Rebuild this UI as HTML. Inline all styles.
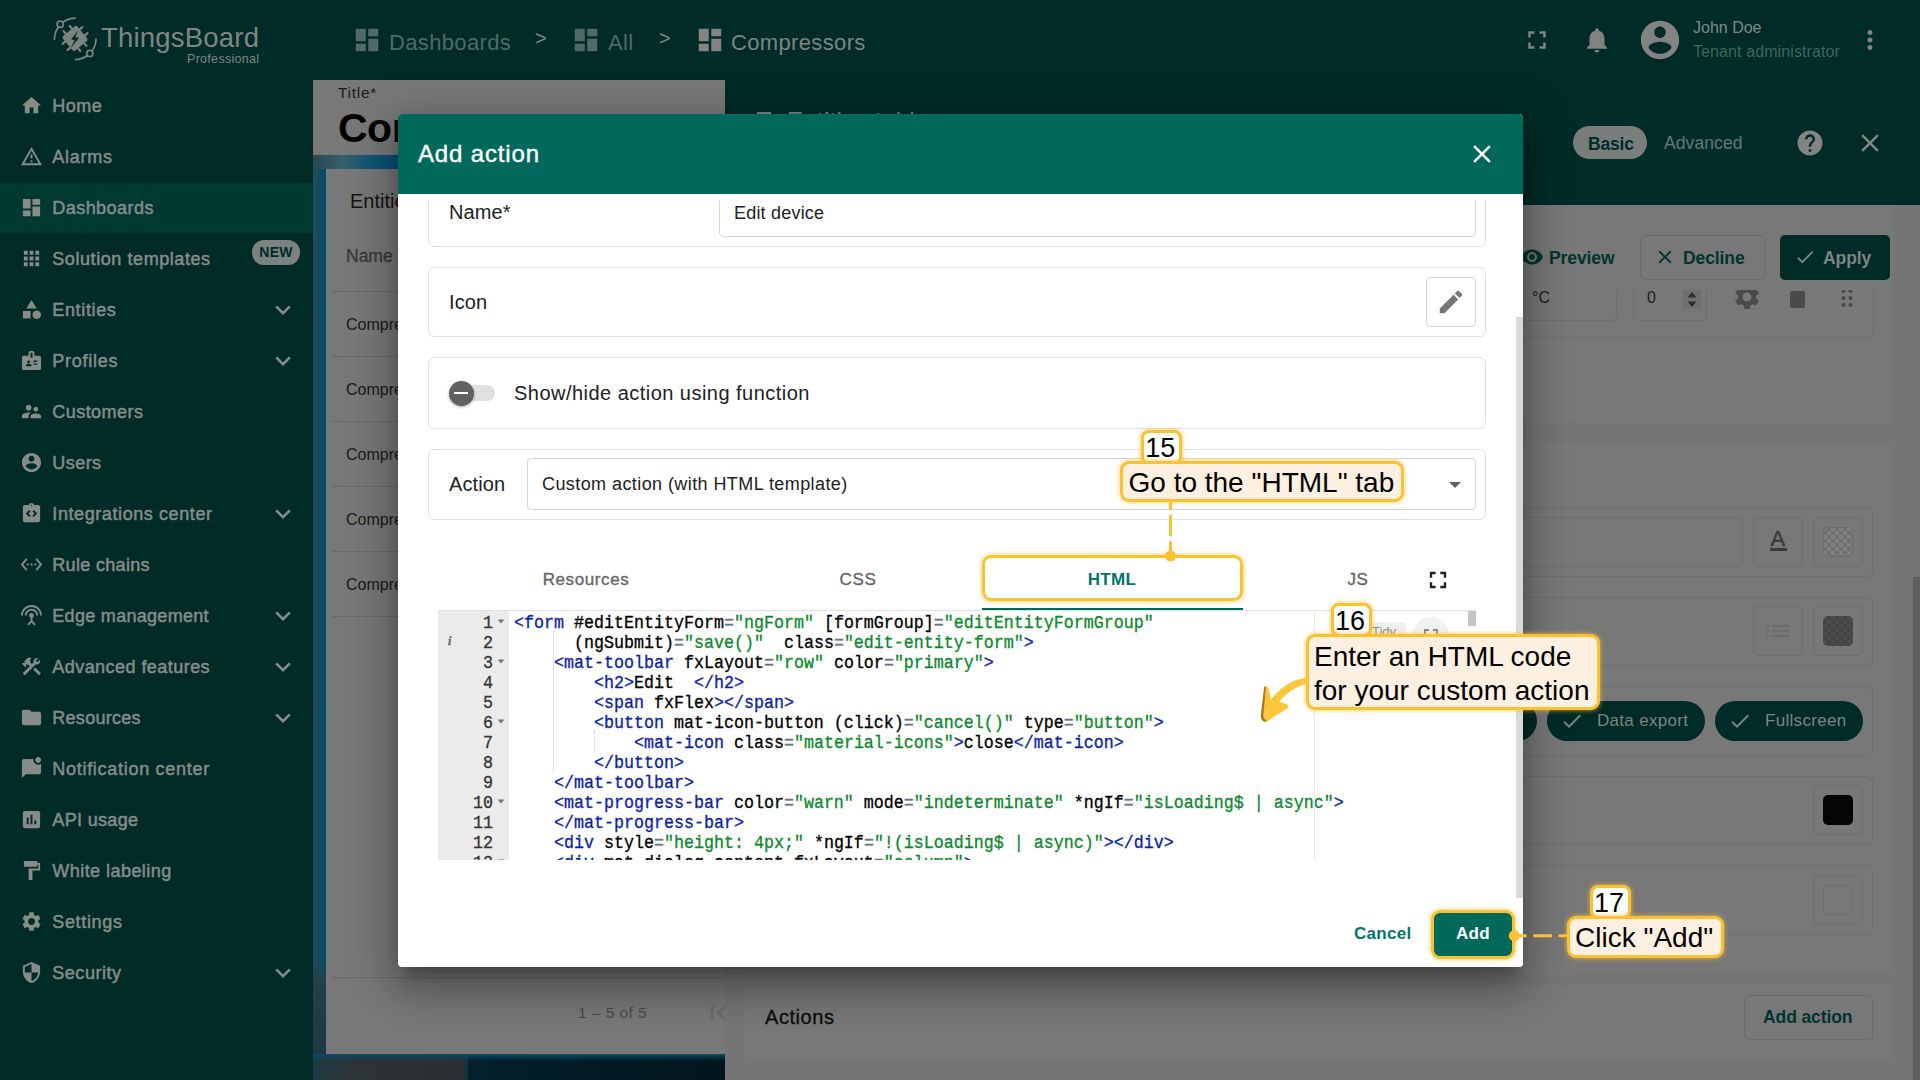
<!DOCTYPE html>
<html><head><meta charset="utf-8"><title>ThingsBoard</title>
<style>
*{box-sizing:border-box;margin:0;padding:0}
html,body{width:1920px;height:1080px;overflow:hidden;background:#787878;font-family:"Liberation Sans",sans-serif}
.abs{position:absolute}
#side{position:absolute;left:0;top:0;width:313px;height:1080px;background:#002b27}
#top{position:absolute;left:313px;top:0;width:1607px;height:80px;background:#002b27}
.mi{position:absolute;left:0;width:313px;height:51px;color:#868c8a;font-size:18px;letter-spacing:.45px;-webkit-text-stroke:.5px #868c8a}
.mi span{position:absolute;left:52.300px;top:16px;white-space:nowrap;line-height:20px}
.mi svg.ic{position:absolute;left:19.500px;top:14px;width:23px;height:23px;fill:#868c8a}
.mi svg.ch{position:absolute;left:271px;top:14px;width:24px;height:24px;fill:none;stroke:#868c8a;stroke-width:2.6}
.mi.act{background:linear-gradient(180deg,#002b27 0,#002b27 1px,#003832 1px,#003832 100%)}
.t{position:absolute;white-space:nowrap}
.new{-webkit-text-stroke:0;position:absolute;left:252px;top:7px;width:48px;height:25px;border-radius:12px;background:#7b8381;color:#002b27;font-size:14px;line-height:24px;text-align:center;letter-spacing:.3px}
.bc{top:29px;font-size:22px;line-height:28px;letter-spacing:.35px}

#dash{position:absolute;left:313px;top:80px;width:412px;height:1000px;overflow:hidden;background:linear-gradient(90deg,#264a56 0,#0a4c5c 8px,#004a66 12px,#003f6a 100%)}
#dtitle{position:absolute;left:0;top:0;width:412px;height:75px;background:#787878}
#dbot{position:absolute;left:0;top:974px;width:412px;height:26px;background:linear-gradient(180deg,#0b4a66 0,rgba(11,74,102,0) 7px),linear-gradient(90deg,#1d3a42 0,#2c3335 40px,#2a2f30 152px,#0a3648 154px,#03202c 156px,#02151d 100%)}
#wcard{position:absolute;left:13px;top:89px;width:420px;height:885px;background:#787878}
#wcard .ln{position:absolute;left:6px;right:0;height:1px;background:#6a6a6a}
#rp{position:absolute;left:725px;top:80px;width:1195px;height:1000px;background:#757575;overflow:hidden}
#rph{position:absolute;left:0;top:0;width:1195px;height:125px;background:#002b27}
.card{position:absolute;border:1px solid #6e6e6e;border-radius:6px}
#dlg{position:absolute;left:398px;top:114px;width:1125px;height:853px;background:#fff;border-radius:4px;box-shadow:0 11px 15px -7px rgba(0,0,0,.28),0 24px 38px 3px rgba(0,0,0,.2),0 9px 46px 8px rgba(0,0,0,.18);overflow:hidden}
#dh{z-index:5;position:absolute;left:0;top:0;width:1125px;height:80px;background:#00695c}
.box{position:absolute;left:30px;width:1058px;border:1px solid #e0e0e0;border-radius:6px}
.lbl{position:absolute;left:51px;font-size:20px;line-height:24px;color:#212121;white-space:nowrap;letter-spacing:.1px}
.inp{position:absolute;border:1px solid #d6d6d6;border-radius:4px}
.tab{position:absolute;top:454.700px;font-size:17px;line-height:22px;color:#666;white-space:nowrap;letter-spacing:.6px;transform:translateX(-50%);-webkit-text-stroke:.35px #666}
#ed{position:absolute;left:40px;top:497px;width:1038px;height:249px;overflow:hidden;background:#fff;font-family:"Liberation Mono",monospace;font-size:16.67px;line-height:20px;-webkit-text-stroke:.3px}
#gut{position:absolute;left:0;top:0;width:71px;height:249px;background:#ebebeb}
.cl{position:absolute;left:76px;white-space:pre;color:#000;height:20px;margin-top:3px;transform:scaleY(1.06);transform-origin:0 70%}
.gn{position:absolute;left:0;width:55px;text-align:right;color:#333;height:20px;margin-top:3px;transform:scaleY(1.06);transform-origin:0 70%}
.tg{color:#0a1ea8}.st{color:#0a8a2c}.eq{color:#687687}
.an{position:absolute;font-family:"Liberation Sans",sans-serif;font-size:28px;color:#000;white-space:nowrap;border:3px solid #fbc131;box-shadow:0 0 5px rgba(251,193,49,.85)}
.an.nb{background:#fff;border-radius:8px;line-height:30px;text-align:center;font-size:27px;text-indent:-2px}
.an.tx{background:#fef0e0;border-radius:9px;line-height:34px;padding:0 0 0 5px}
.cp{left:20px;font-size:16px;line-height:20px;color:#1a1a1a}
.bt{font-size:17.500px;line-height:22px;font-weight:bold;color:#00352f;letter-spacing:-.1px}
.ck{width:30px;height:30px;border-radius:5px;background-image:linear-gradient(45deg,rgba(0,0,0,.12) 25%,transparent 25%,transparent 75%,rgba(0,0,0,.12) 75%),linear-gradient(45deg,rgba(0,0,0,.12) 25%,transparent 25%,transparent 75%,rgba(0,0,0,.12) 75%);background-size:8px 8px;background-position:0 0,4px 4px}
.chip{height:40px;border-radius:20px;background:#002b27}
.chip svg{position:absolute;left:13px;top:8px;width:24px;height:24px;fill:#7d8583}
.chip span{position:absolute;left:50px;top:9px;font-size:17px;line-height:22px;color:#7d8583;white-space:nowrap;letter-spacing:.3px}
</style></head><body>
<div id="side">
<svg class="abs" style="left:50px;top:14px;width:50px;height:50px" viewBox="0 0 50 50">
<g fill="none" stroke="#7d8281" stroke-width="1.700" stroke-linecap="round">
<path d="M4.500 25.500A21 21 0 0 1 25 4.200"/><path d="M46 25A21 21 0 0 1 25.500 45.600"/>
<circle cx="10.200" cy="10.200" r="3.100" fill="#002b27"/><circle cx="39.800" cy="39.400" r="3.100" fill="#002b27"/>
</g>
<g transform="translate(25 24.500) rotate(50)">
<g stroke="#7d8281" stroke-width="2.200" stroke-linecap="round"><path d="M-4-13v26M4-13v26M-13-4h26M-13 4h26"/></g>
<rect x="-9.500" y="-9.500" width="19" height="19" rx="2" fill="#7d8281"/>
</g>
<path d="M28.200 16.200l-7.200 9.300 3.600.6-3.800 8 8.200-10.300-3.700-.6z" fill="#002b27"/>
</svg>
<span class="t" style="left:101px;top:21px;font-size:27.500px;line-height:34px;color:#818685;letter-spacing:.2px">ThingsBoard</span>
<span class="t" style="left:187px;top:50.500px;font-size:12.500px;line-height:16px;color:#818685;letter-spacing:.3px">Professional</span>
<div class="mi" style="top:80px"><svg class="ic" viewBox="0 0 24 24"><path d="M10 20v-6h4v6h5v-8h3L12 3 2 12h3v8z"/></svg><span>Home</span></div>
<div class="mi" style="top:131px"><svg class="ic" viewBox="0 0 24 24"><path d="M12 5.99L19.53 19H4.47L12 5.99M12 2L1 21h22L12 2zm1 14h-2v2h2v-2zm0-6h-2v4h2v-4z"/></svg><span style="letter-spacing:0.72px">Alarms</span></div>
<div class="mi act" style="top:182px"><svg class="ic" viewBox="0 0 24 24"><path d="M3 13h8V3H3v10zm0 8h8v-6H3v6zm10 0h8V11h-8v10zm0-18v6h8V3h-8z"/></svg><span>Dashboards</span></div>
<div class="mi" style="top:233px"><svg class="ic" viewBox="0 0 24 24"><path d="M4 8h4V4H4v4zm6 12h4v-4h-4v4zm-6 0h4v-4H4v4zm0-6h4v-4H4v4zm6 0h4v-4h-4v4zm6-10v4h4V4h-4zm-6 4h4V4h-4v4zm6 6h4v-4h-4v4zm0 6h4v-4h-4v4z"/></svg><span style="letter-spacing:0.57px">Solution templates</span><b class="new">NEW</b></div>
<div class="mi" style="top:284px"><svg class="ic" viewBox="0 0 24 24"><path d="M12 2l-5.5 9h11z M17.5 13a4.5 4.5 0 1 0 0 9 4.5 4.5 0 0 0 0-9z M3 13.5h8v8H3z"/></svg><span style="letter-spacing:0.65px">Entities</span><svg class="ch" viewBox="0 0 24 24"><path d="M5.200 8.400l6.800 6.800 6.800-6.800"/></svg></div>
<div class="mi" style="top:335px"><svg class="ic" viewBox="0 0 24 24"><path d="M20 7h-5V4c0-1.1-.9-2-2-2h-2c-1.1 0-2 .9-2 2v3H4c-1.1 0-2 .9-2 2v11c0 1.1.9 2 2 2h16c1.1 0 2-.9 2-2V9c0-1.1-.9-2-2-2zM9 12c.83 0 1.5.67 1.5 1.5S9.83 15 9 15s-1.500-.67-1.500-1.500S8.170 12 9 12zm3 6H6v-.75c0-1 2-1.500 3-1.500s3 .5 3 1.500V18zm1-9h-2V4h2v5zm5 7.500h-4V15h4v1.500zm0-3h-4V12h4v1.500z"/></svg><span style="letter-spacing:0.75px">Profiles</span><svg class="ch" viewBox="0 0 24 24"><path d="M5.200 8.400l6.800 6.800 6.800-6.800"/></svg></div>
<div class="mi" style="top:386px"><svg class="ic" viewBox="0 0 24 24"><path d="M16.5 12c1.38 0 2.49-1.12 2.49-2.5S17.88 7 16.5 7C15.12 7 14 8.12 14 9.5s1.12 2.5 2.5 2.5zM9 11c1.66 0 2.99-1.34 2.99-3S10.66 5 9 5C7.34 5 6 6.34 6 8s1.34 3 3 3zm7.5 3c-1.83 0-5.5.92-5.5 2.75V19h11v-2.250c0-1.83-3.67-2.75-5.500-2.75zM9 13c-2.33 0-7 1.17-7 3.5V19h7v-2.250c0-.85.33-2.34 2.37-3.47C10.500 13.100 9.660 13 9 13z"/></svg><span>Customers</span></div>
<div class="mi" style="top:437px"><svg class="ic" viewBox="0 0 24 24"><path d="M12 2C6.48 2 2 6.48 2 12s4.48 10 10 10 10-4.48 10-10S17.52 2 12 2zm0 3c1.66 0 3 1.34 3 3s-1.34 3-3 3-3-1.34-3-3 1.34-3 3-3zm0 14.2c-2.5 0-4.71-1.28-6-3.22.03-1.99 4-3.08 6-3.08 1.99 0 5.97 1.09 6 3.08-1.29 1.94-3.5 3.22-6 3.220z"/></svg><span>Users</span></div>
<div class="mi" style="top:488px"><svg class="ic" viewBox="0 0 24 24"><path d="M19 3h-4.18C14.4 1.84 13.3 1 12 1c-1.3 0-2.4.84-2.82 2H5c-1.1 0-2 .9-2 2v14c0 1.1.9 2 2 2h14c1.1 0 2-.9 2-2V5c0-1.1-.9-2-2-2zm-8 11.170l-1.410 1.420L6 12l3.590-3.590L11 9.830 8.830 12 11 14.170zm1-9.920c-.41 0-.75-.34-.75-.75s.34-.75.75-.75.75.34.75.75-.34.75-.75.750zm2.410 11.340L13 14.170 15.170 12 13 9.830l1.410-1.420L18 12l-3.590 3.590z"/></svg><span style="letter-spacing:0.59px">Integrations center</span><svg class="ch" viewBox="0 0 24 24"><path d="M5.200 8.400l6.800 6.800 6.800-6.800"/></svg></div>
<div class="mi" style="top:539px"><svg class="ic" viewBox="0 0 24 24"><path d="M7.77 6.76L6.23 5.48.82 12l5.41 6.52 1.54-1.28L3.42 12l4.35-5.240zM7 13h2v-2H7v2zm10-2h-2v2h2v-2zm-6 2h2v-2h-2v2zm6.770-7.520l-1.540 1.280L20.580 12l-4.350 5.240 1.540 1.280L23.180 12l-5.410-6.520z"/></svg><span style="letter-spacing:0.32px">Rule chains</span></div>
<div class="mi" style="top:590px"><svg class="ic" viewBox="0 0 24 24"><path d="M12 5c-3.87 0-7 3.13-7 7h2c0-2.76 2.24-5 5-5s5 2.24 5 5h2c0-3.87-3.13-7-7-7zm1 9.290c.88-.39 1.5-1.26 1.5-2.29 0-1.38-1.12-2.5-2.5-2.5S9.5 10.620 9.500 12c0 1.020.62 1.9 1.500 2.290v3.300L7.590 21 9 22.410l3-3 3 3L16.410 21 13 17.590v-3.300zM12 1C5.930 1 1 5.930 1 12h2c0-4.970 4.030-9 9-9s9 4.030 9 9h2c0-6.070-4.930-11-11-11z"/></svg><span style="letter-spacing:0.30px">Edge management</span><svg class="ch" viewBox="0 0 24 24"><path d="M5.200 8.400l6.800 6.800 6.800-6.800"/></svg></div>
<div class="mi" style="top:641px"><svg class="ic" viewBox="0 0 24 24"><path d="M13.783 15.172l2.121-2.121 5.996 5.996-2.121 2.121zM17.5 10c1.93 0 3.5-1.57 3.5-3.5 0-.58-.16-1.12-.41-1.6l-2.7 2.7-1.490-1.490 2.700-2.700c-.48-.25-1.020-.41-1.600-.41C15.570 3 14 4.570 14 6.500c0 .41.08.8.21 1.160l-1.850 1.850-1.780-1.780.71-.71-1.410-1.410L12 3.490c-1.170-1.170-3.070-1.170-4.240 0L4.220 7.030l1.410 1.410H2.810l-.71.71 3.540 3.540.71-.71V9.150l1.410 1.410.71-.71 1.780 1.780-7.410 7.410 2.120 2.120L16.340 9.790c.36.13.75.21 1.160.21z"/></svg><span>Advanced features</span><svg class="ch" viewBox="0 0 24 24"><path d="M5.200 8.400l6.800 6.800 6.800-6.800"/></svg></div>
<div class="mi" style="top:692px"><svg class="ic" viewBox="0 0 24 24"><path d="M10 4H4c-1.1 0-1.99.9-1.990 2L2 18c0 1.100.9 2 2 2h16c1.100 0 2-.9 2-2V8c0-1.100-.9-2-2-2h-8l-2-2z"/></svg><span style="letter-spacing:0.28px">Resources</span><svg class="ch" viewBox="0 0 24 24"><path d="M5.200 8.400l6.800 6.800 6.800-6.800"/></svg></div>
<div class="mi" style="top:743px"><svg class="ic" viewBox="0 0 24 24"><path d="M22 6.98V16c0 1.1-.9 2-2 2H6l-4 4V4c0-1.100.9-2 2-2h10.100c-.06.32-.1.66-.1 1 0 2.760 2.240 5 5 5 1.130 0 2.160-.39 3-1.020zM16 3c0 1.660 1.340 3 3 3s3-1.340 3-3-1.340-3-3-3-3 1.340-3 3z"/></svg><span style="letter-spacing:0.71px">Notification center</span></div>
<div class="mi" style="top:794px"><svg class="ic" viewBox="0 0 24 24"><path d="M19 3H5c-1.1 0-2 .9-2 2v14c0 1.1.9 2 2 2h14c1.1 0 2-.9 2-2V5c0-1.1-.9-2-2-2zM9 17H7v-7h2v7zm4 0h-2V7h2v10zm4 0h-2v-4h2v4z"/></svg><span style="letter-spacing:0.33px">API usage</span></div>
<div class="mi" style="top:845px"><svg class="ic" viewBox="0 0 24 24"><path d="M18 4V3c0-.55-.45-1-1-1H5c-.55 0-1 .45-1 1v4c0 .55.45 1 1 1h12c.55 0 1-.45 1-1V6h1v4H9v11c0 .55.45 1 1 1h2c.55 0 1-.45 1-1v-9h8V4h-3z"/></svg><span>White labeling</span></div>
<div class="mi" style="top:896px"><svg class="ic" viewBox="0 0 24 24"><path d="M19.14 12.94c.04-.3.06-.61.06-.94 0-.32-.02-.64-.07-.94l2.030-1.580c.18-.14.23-.41.12-.61l-1.920-3.320c-.12-.22-.37-.29-.59-.22l-2.390.96c-.5-.38-1.030-.7-1.620-.94l-.36-2.540c-.04-.24-.24-.41-.48-.41h-3.840c-.24 0-.43.17-.47.41l-.36 2.540c-.59.24-1.130.57-1.620.94l-2.390-.96c-.22-.08-.47 0-.59.22L2.740 8.870c-.12.21-.08.47.12.61l2.030 1.580c-.05.3-.09.63-.09.94s.02.64.07.94l-2.030 1.580c-.18.14-.23.41-.12.61l1.920 3.320c.12.22.37.29.59.22l2.390-.96c.5.38 1.030.7 1.620.94l.36 2.540c.05.24.24.41.48.41h3.840c.24 0 .44-.17.47-.41l.36-2.540c.59-.24 1.130-.56 1.620-.94l2.390.96c.22.08.47 0 .59-.22l1.920-3.320c.12-.22.07-.47-.12-.61l-2.010-1.580zM12 15.600c-1.980 0-3.600-1.620-3.600-3.600s1.620-3.600 3.600-3.600 3.600 1.620 3.600 3.600-1.620 3.600-3.600 3.600z"/></svg><span style="letter-spacing:0.65px">Settings</span></div>
<div class="mi" style="top:947px"><svg class="ic" viewBox="0 0 24 24"><path d="M12 1L3 5v6c0 5.55 3.84 10.74 9 12 5.16-1.26 9-6.45 9-12V5l-9-4zm0 10.990h7c-.53 4.120-3.280 7.790-7 8.940V12H5V6.300l7-3.110v8.800z"/></svg><span style="letter-spacing:0.53px">Security</span><svg class="ch" viewBox="0 0 24 24"><path d="M5.200 8.400l6.800 6.800 6.800-6.800"/></svg></div>

</div>
<div id="top">
<svg class="abs" style="left:39.400px;top:25px;width:30px;height:30px;fill:#506a66" viewBox="0 0 24 24"><path d="M3 13h8V3H3v10zm0 8h8v-6H3v6zm10 0h8V11h-8v10zm0-18v6h8V3h-8z"/></svg>
<span class="t bc" style="left:76px;color:#4f6b67">Dashboards</span>
<span class="t bc" style="left:222px;top:24px;color:#7f8785;font-size:20px">&gt;</span>
<svg class="abs" style="left:258.400px;top:25px;width:30px;height:30px;fill:#506a66" viewBox="0 0 24 24"><path d="M3 13h8V3H3v10zm0 8h8v-6H3v6zm10 0h8V11h-8v10zm0-18v6h8V3h-8z"/></svg>
<span class="t bc" style="left:295px;color:#4f6b67">All</span>
<span class="t bc" style="left:346px;top:24px;color:#7f8785;font-size:20px">&gt;</span>
<svg class="abs" style="left:382px;top:25px;width:30px;height:30px;fill:#838383" viewBox="0 0 24 24"><path d="M3 13h8V3H3v10zm0 8h8v-6H3v6zm10 0h8V11h-8v10zm0-18v6h8V3h-8z"/></svg>
<span class="t bc" style="left:418px;color:#7b8583">Compressors</span>
<svg class="abs" style="left:1209.400px;top:25px;width:30px;height:30px;fill:#838383" viewBox="0 0 24 24"><path d="M7 14H5v5h5v-2H7v-3zm-2-4h2V7h3V5H5v5zm12 7h-3v2h5v-5h-2v3zM14 5v2h3v3h2V5h-5z"/></svg>
<svg class="abs" style="left:1269.400px;top:25px;width:30px;height:30px;fill:#838383" viewBox="0 0 24 24"><path d="M12 22c1.1 0 2-.9 2-2h-4c0 1.1.89 2 2 2zm6-6v-5c0-3.07-1.64-5.64-4.5-6.320V4c0-.83-.67-1.5-1.5-1.5s-1.5.67-1.5 1.5v.680C7.630 5.360 6 7.920 6 11v5l-2 2v1h16v-1l-2-2z"/></svg>
<svg class="abs" style="left:1324px;top:17px;width:46px;height:46px;fill:#838383" viewBox="0 0 24 24"><path d="M12 2C6.48 2 2 6.48 2 12s4.48 10 10 10 10-4.48 10-10S17.52 2 12 2zm0 3c1.66 0 3 1.34 3 3s-1.34 3-3 3-3-1.34-3-3 1.34-3 3-3zm0 14.2c-2.5 0-4.71-1.28-6-3.22.03-1.99 4-3.08 6-3.08 1.99 0 5.97 1.09 6 3.08-1.29 1.94-3.5 3.22-6 3.220z"/></svg>
<span class="t" style="left:1380px;top:18px;font-size:16px;line-height:20px;color:#818987">John Doe</span>
<span class="t" style="left:1380px;top:42px;font-size:16px;line-height:20px;color:#43645f;letter-spacing:.1px">Tenant administrator</span>
<svg class="abs" style="left:1542px;top:25px;width:30px;height:30px;fill:#838383" viewBox="0 0 24 24"><path d="M12 8c1.1 0 2-.9 2-2s-.9-2-2-2-2 .9-2 2 .9 2 2 2zm0 2c-1.1 0-2 .9-2 2s.9 2 2 2 2-.9 2-2-.9-2-2-2zm0 6c-1.1 0-2 .9-2 2s.9 2 2 2 2-.9 2-2-.9-2-2-2z"/></svg>
</div>

<div id="dash">
<div id="dtitle"><span class="t" style="left:25px;top:5px;font-size:15.500px;line-height:16px;color:#1c1c1c;letter-spacing:.7px">Title*</span>
<span class="t" style="left:25px;top:24px;font-size:41px;line-height:48px;font-weight:bold;color:#000;letter-spacing:-.5px">Compressors</span></div>
<div class="abs" style="left:0;top:75px;width:412px;height:14px;background:linear-gradient(90deg,#2a4852 0,#2f505c 13px,#35606f 30px,#0e5674 60px,#004f7c 90px,#004a78 100%)"></div><div id="dbot"></div><div class="abs" style="left:0;top:880px;width:13px;height:94px;background:linear-gradient(180deg,rgba(40,62,70,0) 0,rgba(40,62,70,.85) 20px,rgba(30,55,66,.9) 100%)"></div>
<div id="wcard">
<span class="t" style="left:24px;top:20px;font-size:20px;line-height:24px;color:#141414">Entities</span>
<span class="t" style="left:20px;top:77px;font-size:17.500px;line-height:20px;color:#3a3a3a;-webkit-text-stroke:.3px #3a3a3a">Name</span>
<div class="ln" style="top:122px"></div><div class="ln" style="top:187px"></div><div class="ln" style="top:252px"></div><div class="ln" style="top:317px"></div><div class="ln" style="top:382px"></div><div class="ln" style="top:447px"></div><div class="ln" style="top:808px"></div>
<span class="t cp" style="top:146px">Compressor</span><span class="t cp" style="top:211px">Compressor</span><span class="t cp" style="top:276px">Compressor</span><span class="t cp" style="top:341px">Compressor</span><span class="t cp" style="top:406px">Compressor</span>
<span class="t" style="left:252px;top:835px;font-size:15.500px;line-height:18px;color:#4a4a4a;letter-spacing:.45px">1 – 5 of 5</span>
<svg class="abs" style="left:378px;top:830px;width:28px;height:28px;fill:#6a6a6a" viewBox="0 0 24 24"><path d="M18.410 16.590L13.820 12l4.590-4.590L17 6l-6 6 6 6zM6 6h2v12H6z"/></svg>
</div>
</div>
<div id="rp"><div id="rph"></div>

<div class="abs" style="left:32px;top:32px;width:14px;height:14px;background:#7d8583"></div><span class="t" style="left:62px;top:26px;font-size:24px;line-height:30px;color:#7d8583;letter-spacing:.3px">Entities table</span>
<div class="abs" style="left:846px;top:43px;width:188px;height:40px;border-radius:20px;background:#042d29"></div>
<div class="abs" style="left:848px;top:46px;width:74px;height:33px;border-radius:17px;background:#797d7c"></div>
<span class="t" style="left:863px;top:53.80000000000001px;font-size:17.500px;line-height:20px;font-weight:bold;color:#002b27;letter-spacing:-.2px">Basic</span>
<span class="t" style="left:939px;top:52.80000000000001px;font-size:17.500px;line-height:20px;color:#647977;letter-spacing:.1px">Advanced</span>
<svg class="abs" style="left:1070px;top:48px;width:30px;height:30px;fill:#838383" viewBox="0 0 24 24"><path d="M12 2C6.480 2 2 6.480 2 12s4.480 10 10 10 10-4.480 10-10S17.520 2 12 2zm1 17h-2v-2h2v2zm2.070-7.750l-.9.920C13.450 12.900 13 13.500 13 15h-2v-.5c0-1.100.45-2.100 1.170-2.830l1.240-1.260c.37-.36.59-.86.59-1.410 0-1.100-.9-2-2-2s-2 .9-2 2H8c0-2.210 1.790-4 4-4s4 1.790 4 4c0 .88-.36 1.680-.93 2.250z"/></svg>
<svg class="abs" style="left:1130px;top:48px;width:30px;height:30px;fill:#838383" viewBox="0 0 24 24"><path d="M19 6.410L17.590 5 12 10.590 6.410 5 5 6.410 10.590 12 5 17.590 6.410 19 12 13.410 17.590 19 19 17.590 13.410 12z"/></svg>
<div class="abs" style="left:20px;top:125px;width:1148px;height:218px;background:#787878;border-radius:0 0 8px 8px"></div>
<div class="abs" style="left:20px;top:362px;width:1148px;height:532px;background:#787878;border-radius:8px"></div>
<div class="abs" style="left:20px;top:905px;width:1148px;height:75px;background:#787878;border-radius:8px"></div>
<svg class="abs" style="left:795px;top:165px;width:24px;height:24px;fill:#00352f" viewBox="0 0 24 24"><path d="M12 4.500C7 4.500 2.730 7.610 1 12c1.730 4.390 6 7.500 11 7.500s9.270-3.110 11-7.500c-1.730-4.390-6-7.500-11-7.500zM12 17c-2.760 0-5-2.240-5-5s2.240-5 5-5 5 2.240 5 5-2.240 5-5 5zm0-8c-1.660 0-3 1.340-3 3s1.340 3 3 3 3-1.340 3-3-1.340-3-3-3z"/></svg>
<span class="t bt" style="left:824px;top:167px">Preview</span>
<div class="card" style="left:915px;top:155px;width:125px;height:45px;border-radius:5px;border-color:#6b6b6b"></div>
<svg class="abs" style="left:929px;top:166px;width:22px;height:22px;fill:#00352f" viewBox="0 0 24 24"><path d="M19 6.410L17.590 5 12 10.590 6.410 5 5 6.410 10.590 12 5 17.590 6.410 19 12 13.410 17.590 19 19 17.590 13.410 12z"/></svg>
<span class="t bt" style="left:958px;top:167px">Decline</span>
<div class="abs" style="left:1055px;top:155px;width:110px;height:45px;border-radius:5px;background:#002b27"></div>
<svg class="abs" style="left:1069px;top:166px;width:22px;height:22px;fill:#7d8583" viewBox="0 0 24 24"><path d="M9 16.170L4.830 12l-1.420 1.410L9 19 21 7l-1.410-1.410z"/></svg>
<span class="t bt" style="left:1098px;top:167px;color:#7d8583">Apply</span>
<div class="abs" style="left:20px;top:210px;width:1150px;height:50px;overflow:hidden">
<div class="card" style="left:20px;top:-30px;width:1109px;height:78px"></div>
<div class="card" style="left:400px;top:-30px;width:472px;height:61px;border-radius:5px"></div>
<div class="card" style="left:888px;top:-30px;width:74px;height:61px;border-radius:5px"></div>
</div>
<span class="t" style="left:807px;top:208px;font-size:16px;line-height:20px;color:#1c1c1c">°C</span>
<span class="t" style="left:922px;top:208px;font-size:16px;line-height:20px;color:#1c1c1c">0</span>
<div class="abs" style="left:958px;top:210px;width:18px;height:19px;background:#707070"></div>
<svg class="abs" style="left:961px;top:211px;width:12px;height:17px" viewBox="0 0 12 17"><path d="M1.500 6.500h9L6 1zM1.500 10.500h9L6 16z" fill="#2e2e2e"/></svg>
<svg class="abs" style="left:1007px;top:201.8px;width:30px;height:30px;fill:#4a4a4a" viewBox="0 0 24 24"><path d="M19.140 12.940c.04-.3.06-.61.06-.94 0-.32-.02-.64-.07-.94l2.030-1.580c.18-.14.23-.41.12-.61l-1.920-3.320c-.12-.22-.37-.29-.59-.22l-2.390.96c-.5-.38-1.030-.7-1.620-.94l-.36-2.540c-.04-.24-.24-.41-.48-.41h-3.840c-.24 0-.43.17-.47.41l-.36 2.540c-.59.24-1.130.57-1.620.94l-2.390-.96c-.22-.08-.47 0-.59.22L2.740 8.870c-.12.21-.08.47.12.61l2.030 1.580c-.05.3-.09.63-.09.94s.02.640.07.940l-2.030 1.580c-.18.140-.23.410-.12.610l1.920 3.320c.12.220.37.290.59.220l2.390-.96c.5.380 1.030.7 1.620.940l.36 2.540c.05.240.24.410.48.410h3.840c.24 0 .44-.170.47-.410l.36-2.540c.59-.240 1.130-.560 1.620-.940l2.390.96c.22.08.47 0 .59-.220l1.920-3.320c.12-.220.07-.470-.12-.610l-2.010-1.580zM12 15.600c-1.980 0-3.600-1.620-3.600-3.600s1.620-3.600 3.600-3.600 3.600 1.620 3.600 3.600-1.620 3.600-3.600 3.600z"/></svg>
<div class="abs" style="left:1065px;top:211px;width:15px;height:17px;border-radius:2px;background:#4a4a4a"></div>
<svg class="abs" style="left:1115px;top:210px;width:14px;height:18px;fill:#4a4a4a" viewBox="0 0 14 18"><circle cx="3.500" cy="1" r="2"/><circle cx="10.500" cy="1" r="2"/><circle cx="3.500" cy="8" r="2"/><circle cx="10.500" cy="8" r="2"/><circle cx="3.500" cy="15" r="2"/><circle cx="10.500" cy="15" r="2"/></svg>
<div class="abs" style="left:1008px;top:200px;width:130px;height:10px;background:#787878"></div>
<div class="card" style="left:40px;top:427px;width:1108px;height:70px"></div>
<div class="card" style="left:275px;top:437px;width:743px;height:50px;border-radius:5px"></div>
<div class="card" style="left:1028px;top:437px;width:50px;height:50px;border-radius:5px"></div>
<span class="t" style="left:1045.5px;top:447px;font-size:22px;line-height:24px;color:#3a3a3a;-webkit-text-stroke:.5px #3a3a3a">A</span><div class="abs" style="left:1044.5px;top:468px;width:17.500px;height:2.500px;background:#3a3a3a"></div>
<div class="card" style="left:1088px;top:437px;width:50px;height:50px;border-radius:5px"></div>
<div class="abs ck" style="left:1098px;top:447px;background-color:#808080;box-shadow:inset 0 0 0 1px #6c6c6c"></div>
<div class="card" style="left:40px;top:517px;width:1108px;height:69px"></div>
<div class="card" style="left:1028px;top:526px;width:50px;height:50px;border-radius:5px"></div>
<svg class="abs" style="left:1038px;top:536px;width:30px;height:30px;fill:#6c6c6c" viewBox="0 0 24 24"><path d="M3 13h2v-2H3v2zm0 4h2v-2H3v2zm0-8h2V7H3v2zm4 4h14v-2H7v2zm0 4h14v-2H7v2zM7 7v2h14V7H7z"/></svg>
<div class="card" style="left:1088px;top:526px;width:50px;height:50px;border-radius:5px"></div>
<div class="abs ck" style="left:1098px;top:536px;background-color:#4c4c4c;border:none"></div>
<div class="card" style="left:40px;top:606px;width:1108px;height:70px"></div>
<div class="abs chip" style="left:675px;top:621px;width:137px"></div>
<div class="abs chip" style="left:822px;top:621px;width:158px"><svg viewBox="0 0 24 24"><path d="M9 16.170L4.830 12l-1.420 1.410L9 19 21 7l-1.410-1.410z"/></svg><span>Data export</span></div>
<div class="abs chip" style="left:990px;top:621px;width:148px"><svg viewBox="0 0 24 24"><path d="M9 16.170L4.830 12l-1.420 1.410L9 19 21 7l-1.410-1.410z"/></svg><span>Fullscreen</span></div>
<div class="card" style="left:40px;top:696px;width:1108px;height:69px"></div>
<div class="card" style="left:1088px;top:705px;width:50px;height:50px;border-radius:5px"></div>
<div class="abs" style="left:1098px;top:715px;width:30px;height:30px;border-radius:5px;background:#050505"></div>
<div class="card" style="left:40px;top:785px;width:1108px;height:70px"></div>
<div class="card" style="left:1088px;top:795px;width:50px;height:50px;border-radius:5px"></div>
<div class="card" style="left:1098px;top:805px;width:30px;height:30px;border-radius:5px"></div>
<span class="t" style="left:40px;top:925px;font-size:20px;line-height:24px;color:#0d0d0d;letter-spacing:.55px;-webkit-text-stroke:.3px #0d0d0d">Actions</span>
<div class="card" style="left:1019px;top:915px;width:129px;height:45px;border-radius:5px;border-color:#6b6b6b"></div>
<span class="t bt" style="left:1038px;top:926px">Add action</span>
<div class="abs" style="left:1188px;top:497px;width:7px;height:503px;background:#5f5f5f"></div>

</div>
<div id="dlg"><div id="dh"><span class="t" style="left:20px;top:24.700px;font-size:24px;line-height:30px;color:#fff;letter-spacing:.85px;-webkit-text-stroke:.4px #fff">Add action</span>
<svg class="abs" style="left:1069px;top:25px;width:30px;height:30px;fill:#fff" viewBox="0 0 24 24"><path d="M19 6.410L17.590 5 12 10.590 6.410 5 5 6.410 10.590 12 5 17.590 6.410 19 12 13.410 17.590 19 19 17.590 13.410 12z"/></svg></div>

<div class="box" style="top:40px;height:93px"></div>
<div class="abs" style="left:0;top:80px;width:1118px;height:5.500px;background:#fff;z-index:3"></div><span class="lbl" style="top:85.500px">Name*</span>
<div class="inp" style="left:321px;top:60px;width:757px;height:63px"></div>
<span class="t" style="left:336px;top:87px;font-size:18px;line-height:24px;color:#212121;letter-spacing:.2px">Edit device</span>
<div class="box" style="top:153px;height:70px"></div>
<span class="lbl" style="top:176px">Icon</span>
<div class="inp" style="left:1028px;top:163px;width:50px;height:50px"></div>
<svg class="abs" style="left:1037.800px;top:173.200px;width:30px;height:30px;fill:#757575" viewBox="0 0 24 24"><path d="M3 17.250V21h3.750L17.810 9.940l-3.750-3.750L3 17.250zM20.710 7.040c.39-.39.39-1.020 0-1.410l-2.340-2.340c-.39-.39-1.020-.39-1.410 0l-1.830 1.830 3.750 3.750 1.830-1.830z"/></svg>
<div class="box" style="top:243px;height:72px"></div>
<div class="abs" style="left:62px;top:271px;width:35px;height:16px;border-radius:8px;background:#e0e0e0"></div>
<div class="abs" style="left:50.500px;top:266.500px;width:25px;height:25px;border-radius:13px;background:#616161;box-shadow:0 1px 3px rgba(0,0,0,.35)"><div class="abs" style="left:5.500px;top:11.500px;width:14px;height:2px;background:#fff"></div></div>
<span class="lbl" style="left:116px;top:267px;letter-spacing:.47px">Show/hide action using function</span>
<div class="box" style="top:335px;height:71px"></div>
<span class="lbl" style="top:358px">Action</span>
<div class="inp" style="left:129px;top:344px;width:949px;height:52px"></div>
<span class="t" style="left:144px;top:358px;font-size:18px;line-height:24px;color:#212121;letter-spacing:.42px">Custom action (with HTML template)</span>
<svg class="abs" style="left:1050px;top:367px;width:14px;height:8px" viewBox="0 0 14 8"><path d="M1 1h12L7 7z" fill="#616161"/></svg>
<span class="tab" style="left:188px">Resources</span><span class="tab" style="left:460px">CSS</span><span class="tab" style="left:714px;color:#00756a;font-weight:bold;-webkit-text-stroke:0;letter-spacing:.3px">HTML</span><span class="tab" style="left:960px">JS</span>
<svg class="abs" style="left:1026px;top:452px;width:28px;height:28px;fill:#212121" viewBox="0 0 24 24"><path d="M7 14H5v5h5v-2H7v-3zm-2-4h2V7h3V5H5v5zm12 7h-3v2h5v-5h-2v3zM14 5v2h3v3h2V5h-5z"/></svg>
<div class="abs" style="left:40px;top:496px;width:1038px;height:1px;background:#e0e0e0"></div>
<div class="abs" style="left:584px;top:493.500px;width:261px;height:2.500px;background:#00695c"></div>
<div id="ed"><div id="gut"></div><div class="gn" style="top:0px">1</div><svg class="abs" style="left:59px;top:8px;width:8px;height:5px" viewBox="0 0 8 5"><path d="M0.500 0.500h7L4 4.500z" fill="#777"/></svg><div class="cl" style="top:0px"><span class="tg">&lt;form</span> #editEntityForm<span class="eq">=</span><span class="st">"ngForm"</span> [formGroup]<span class="eq">=</span><span class="st">"editEntityFormGroup"</span></div><div class="gn" style="top:20px">2</div><div class="cl" style="top:20px">      (ngSubmit)<span class="eq">=</span><span class="st">"save()"</span>  class<span class="eq">=</span><span class="st">"edit-entity-form"</span><span class="tg">&gt;</span></div><div class="gn" style="top:40px">3</div><svg class="abs" style="left:59px;top:48px;width:8px;height:5px" viewBox="0 0 8 5"><path d="M0.500 0.500h7L4 4.500z" fill="#777"/></svg><div class="cl" style="top:40px">    <span class="tg">&lt;mat-toolbar</span> fxLayout<span class="eq">=</span><span class="st">"row"</span> color<span class="eq">=</span><span class="st">"primary"</span><span class="tg">&gt;</span></div><div class="gn" style="top:60px">4</div><div class="cl" style="top:60px">        <span class="tg">&lt;h2&gt;</span>Edit  <span class="tg">&lt;/h2&gt;</span></div><div class="gn" style="top:80px">5</div><div class="cl" style="top:80px">        <span class="tg">&lt;span</span> fxFlex<span class="tg">&gt;&lt;/span&gt;</span></div><div class="gn" style="top:100px">6</div><svg class="abs" style="left:59px;top:108px;width:8px;height:5px" viewBox="0 0 8 5"><path d="M0.500 0.500h7L4 4.500z" fill="#777"/></svg><div class="cl" style="top:100px">        <span class="tg">&lt;button</span> mat-icon-button (click)<span class="eq">=</span><span class="st">"cancel()"</span> type<span class="eq">=</span><span class="st">"button"</span><span class="tg">&gt;</span></div><div class="gn" style="top:120px">7</div><div class="cl" style="top:120px">            <span class="tg">&lt;mat-icon</span> class<span class="eq">=</span><span class="st">"material-icons"</span><span class="tg">&gt;</span>close<span class="tg">&lt;/mat-icon&gt;</span></div><div class="gn" style="top:140px">8</div><div class="cl" style="top:140px">        <span class="tg">&lt;/button&gt;</span></div><div class="gn" style="top:160px">9</div><div class="cl" style="top:160px">    <span class="tg">&lt;/mat-toolbar&gt;</span></div><div class="gn" style="top:180px">10</div><svg class="abs" style="left:59px;top:188px;width:8px;height:5px" viewBox="0 0 8 5"><path d="M0.500 0.500h7L4 4.500z" fill="#777"/></svg><div class="cl" style="top:180px">    <span class="tg">&lt;mat-progress-bar</span> color<span class="eq">=</span><span class="st">"warn"</span> mode<span class="eq">=</span><span class="st">"indeterminate"</span> *ngIf<span class="eq">=</span><span class="st">"isLoading$ | async"</span><span class="tg">&gt;</span></div><div class="gn" style="top:200px">11</div><div class="cl" style="top:200px">    <span class="tg">&lt;/mat-progress-bar&gt;</span></div><div class="gn" style="top:220px">12</div><div class="cl" style="top:220px">    <span class="tg">&lt;div</span> style<span class="eq">=</span><span class="st">"height: 4px;"</span> *ngIf<span class="eq">=</span><span class="st">"!(isLoading$ | async)"</span><span class="tg">&gt;&lt;/div&gt;</span></div><div class="gn" style="top:240px">13</div><svg class="abs" style="left:59px;top:248px;width:8px;height:5px" viewBox="0 0 8 5"><path d="M0.500 0.500h7L4 4.500z" fill="#777"/></svg><div class="cl" style="top:240px">    <span class="tg">&lt;div</span> mat-dialog-content fxLayout<span class="eq">=</span><span class="st">"column"</span><span class="tg">&gt;</span></div><span class="abs" style="left:10px;top:20px;font-family:'Liberation Serif',serif;font-style:italic;font-weight:bold;font-size:12px;line-height:20px;color:#666">i</span><div class="abs" style="left:876px;top:0;width:1px;height:249px;background:#e8e8e8"></div><div class="abs" style="left:115px;top:20px;width:0;height:140px;border-left:1px dotted #cfcfcf"></div><div class="abs" style="left:156px;top:120px;width:0;height:20px;border-left:1px dotted #cfcfcf"></div><div class="abs" style="left:930px;top:11px;width:38px;height:24px;border-radius:4px;background:#f0f0f0"></div><span class="abs" style="left:934px;top:13px;font-family:'Liberation Sans',sans-serif;font-size:13px;line-height:16px;color:#8a8a8a;-webkit-text-stroke:0">Tidy</span>
<div class="abs" style="left:974px;top:6px;width:37px;height:37px;border-radius:19px;background:#f1f1f1"></div><svg class="abs" style="left:981px;top:13px;width:24px;height:24px;fill:#8a8a8a" viewBox="0 0 24 24"><path d="M7 14H5v5h5v-2H7v-3zm-2-4h2V7h3V5H5v5zm12 7h-3v2h5v-5h-2v3zM14 5v2h3v3h2V5h-5z"/></svg><div class="abs" style="left:1030px;top:0;width:8px;height:15px;background:#c4c4c4"></div></div>
<span class="t" style="left:956px;top:808px;font-size:17px;line-height:24px;font-weight:bold;color:#00756a;letter-spacing:.3px">Cancel</span>
<div class="abs" style="left:1035px;top:798px;width:80px;height:45px;border-radius:7px;background:#00695c"></div>
<span class="t" style="left:1058px;top:808px;font-size:17px;line-height:24px;font-weight:bold;color:#fff;letter-spacing:.3px">Add</span>
<div class="abs" style="left:1118px;top:80px;width:7px;height:773px;background:#fff"></div>
<div class="abs" style="left:1118px;top:203px;width:7px;height:581px;background:#d9d9d9"></div>

</div>

<div class="an nb" style="left:1140.500px;top:430px;width:41.500px;height:34.500px">15</div>
<div class="an tx" style="left:1120px;top:461px;width:284px;height:41px;line-height:37.500px;padding-left:5.500px">Go to the "HTML" tab</div>
<svg class="abs" style="left:1160px;top:500px;width:20px;height:64px" viewBox="0 0 20 64"><path d="M10.500 2v53" stroke="#fcc232" stroke-width="3" stroke-dasharray="21.250 5" stroke-dashoffset="13.250"/><circle cx="10.500" cy="56" r="5.500" fill="#fcc232"/></svg>
<div class="an" style="left:982px;top:555px;width:261px;height:46px;border-radius:9px"></div>
<div class="an nb" style="left:1330.500px;top:602.500px;width:41px;height:34.500px">16</div>
<div class="an tx" style="left:1306px;top:634px;width:294px;height:76px;padding-top:3px">Enter an HTML code<br>for your custom action</div>

<div class="an" style="left:1431px;top:910px;width:84px;height:49px;border-radius:9px"></div>
<svg class="abs" style="left:1505px;top:925px;width:70px;height:22px" viewBox="0 0 70 22"><path d="M9 10.700h54" stroke="#fcc232" stroke-width="3" stroke-dasharray="18.600 6.600" stroke-dashoffset="5.900"/><circle cx="9.300" cy="10.700" r="5.500" fill="#fcc232"/></svg>
<svg class="abs" style="left:1255px;top:670px;width:60px;height:56px" viewBox="0 0 60 56"><defs><linearGradient id="ag" x1="0" y1="0" x2="1" y2="1"><stop offset="0" stop-color="#fdc93f"/><stop offset="1" stop-color="#e9a820"/></linearGradient></defs>
<path d="M52 7.600Q33 10.500 21.100 23.700L15.800 29.500 13.500 18.500Q12 14.800 9.300 16.600L5.800 46Q6.300 52.800 12.200 51.200L32 38.600Q35.200 36.200 31.500 34L24.300 32.100Q31 21 52 12.900z" fill="#fdc53a"/><path d="M9.300 16.600L5.800 46Q6.300 52.800 12.200 51.200L10.400 49.800Q8.200 48.600 8.300 45.500L10.800 17z" fill="#a8721f"/></svg>
<div class="an nb" style="left:1589.500px;top:885px;width:41px;height:34px">17</div>
<div class="an tx" style="left:1567px;top:916px;width:157px;height:42px;line-height:37px">Click "Add"</div>

</body></html>
